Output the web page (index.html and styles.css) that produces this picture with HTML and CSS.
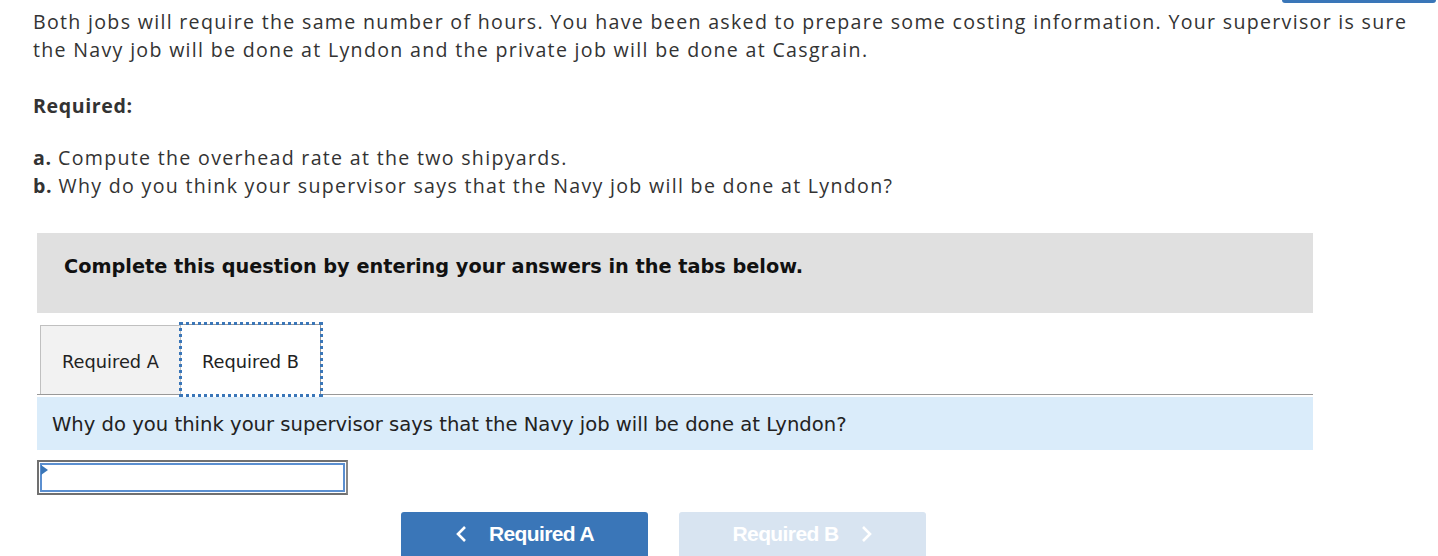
FILE: index.html
```html
<!DOCTYPE html>
<html>
<head>
<meta charset="utf-8">
<link rel="stylesheet" href="styles.css">
</head>
<body>
<div class="topbtn"></div>
<div class="page">
  <p class="intro">Both jobs will require the same number of hours. You have been asked to prepare some costing information. Your supervisor is sure the Navy job will be done at Lyndon and the private job will be done at Casgrain.</p>
  <p class="req-title">Required:</p>
  <p class="req-list"><b>a.</b> Compute the overhead rate at the two shipyards.<br><b>b.</b> Why do you think your supervisor says that the Navy job will be done at Lyndon?</p>

  <div class="widget">
    <div class="banner">Complete this question by entering your answers in the tabs below.</div>
    <div class="tabs">
      <div class="tab">Required A</div>
      <div class="tab active">Required B</div>
    </div>
    <div class="prompt">Why do you think your supervisor says that the Navy job will be done at Lyndon?</div>
    <div class="answer"><div class="answer-inner"><span class="marker"></span></div></div>
    <div class="nav">
      <div class="navbtn prev"><svg class="chev" width="12" height="18" viewBox="0 0 12 18"><path d="M10 2 L3 9 L10 16" fill="none" stroke="#fff" stroke-width="2.6"/></svg><span>Required A</span></div>
      <div class="navbtn next"><span>Required B</span><svg class="chev" width="12" height="18" viewBox="0 0 12 18"><path d="M2 2 L9 9 L2 16" fill="none" stroke="#fff" stroke-width="2.6"/></svg></div>
    </div>
  </div>
</div>
</body>
</html>
```
FILE: styles.css
```css
html, body {
  margin: 0;
  padding: 0;
  background: #fff;
}
body {
  font-family: "Open Sans", "Liberation Sans", sans-serif;
  color: #333;
  overflow: hidden;
  height: 556px;
}
.topbtn {
  position: absolute;
  top: 0;
  left: 1282px;
  width: 154px;
  height: 3px;
  background: #3a76b8;
  border-radius: 0 0 4px 4px;
}
.page {
  padding: 8px 0 0 33px;
  width: 1390px;
}
.intro, .req-list {
  margin: 0;
  font-size: 19.6px;
  line-height: 28px;
  letter-spacing: 1.3px;
}
.req-title {
  margin: 28px 0 0;
  font-size: 19.6px;
  font-weight: 700;
  line-height: 28px;
  letter-spacing: 0.6px;
}
.req-list {
  margin-top: 24px;
}
.req-list b {
  font-weight: 700;
  letter-spacing: 0.6px;
}
.widget {
  margin: 33px 0 0 4px;
  width: 1276px;
}
.banner {
  background: #e0e0e0;
  height: 80px;
  box-sizing: border-box;
  padding: 22px 0 0 27px;
  font-family: "DejaVu Sans", Verdana, sans-serif;
  font-weight: 700;
  font-size: 19.3px;
  color: #111;
}
.tabs {
  display: flex;
  align-items: flex-end;
  margin-top: 11px;
  padding-left: 3px;
  border-bottom: 1px solid #999;
  height: 70px;
}
.tab {
  box-sizing: border-box;
  width: 141px;
  height: 69px;
  border: 1px solid #c0c0c0;
  border-bottom: none;
  background: #f2f2f2;
  display: flex;
  align-items: center;
  justify-content: center;
  padding-top: 2px;
  font-family: "DejaVu Sans", Verdana, sans-serif;
  font-size: 17.8px;
  color: #222;
}
.tab.active {
  width: 140px;
  background: #fff;
  border-color: #999;
  border-left: none;
  outline: 3px dotted #3a76b8;
  outline-offset: -1px;
  height: 71px;
  margin-bottom: -1px;
  position: relative;
  z-index: 1;
}
.prompt {
  margin-top: 2px;
  background: #daecfa;
  height: 53px;
  box-sizing: border-box;
  padding: 16px 0 0 15px;
  font-family: "DejaVu Sans", Verdana, sans-serif;
  font-size: 19.6px;
  color: #222;
}
.answer {
  margin-top: 10px;
  width: 311px;
  height: 35px;
  box-sizing: border-box;
  border: 2px solid #707070;
  border-right-color: #888;
  padding: 1px;
}
.answer-inner {
  position: relative;
  height: 100%;
  box-sizing: border-box;
  border: 2px solid #5b8fd0;
  background: #fff;
}
.marker {
  position: absolute;
  left: -1px;
  top: 0;
  width: 0;
  height: 0;
  border-top: 5px solid transparent;
  border-bottom: 5px solid transparent;
  border-left: 7px solid #3a76b8;
}
.nav {
  display: flex;
  gap: 31px;
  margin: 17px 0 0 364px;
}
.navbtn {
  width: 247px;
  height: 48px;
  border-radius: 3px;
  display: flex;
  align-items: center;
  justify-content: center;
  gap: 22px;
  box-sizing: border-box;
  padding-bottom: 4px;
  font-family: "Liberation Sans", Arial, sans-serif;
  font-weight: 700;
  font-size: 21px;
  letter-spacing: -0.6px;
  color: #fff;
}
.navbtn.prev {
  background: #3a76b8;
}
.navbtn.next {
  background: #d8e4f1;
}
.chev {
  display: block;
}
```
